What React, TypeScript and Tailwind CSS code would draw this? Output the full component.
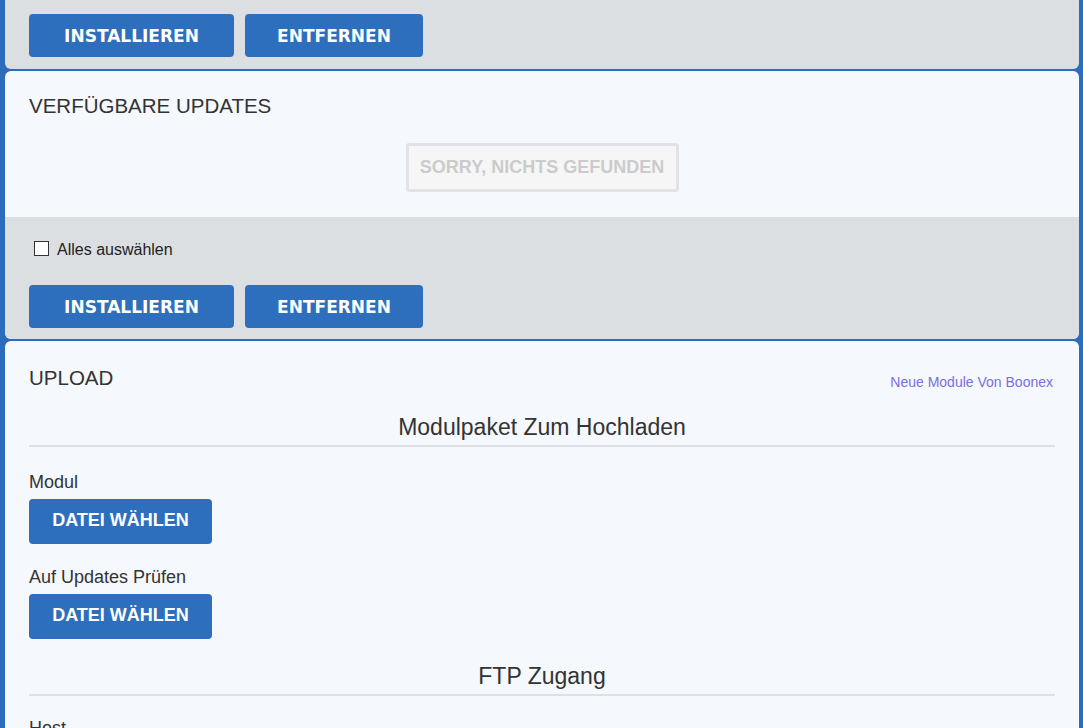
import React from 'react'

const verdana = { fontFamily: '"DejaVu Sans", Verdana, sans-serif' }

function BlueButton({ children, w }: { children: React.ReactNode; w: string }) {
  return (
    <button
      className={`h-[43px] ${w} rounded-[4px] bg-[#2e6fbd] pt-[2px] text-white text-[17px] font-bold`}
      style={verdana}
    >
      {children}
    </button>
  )
}

function ActionRow() {
  return (
    <div className="flex gap-[11px]">
      <BlueButton w="w-[205px]">INSTALLIEREN</BlueButton>
      <BlueButton w="w-[178px]">ENTFERNEN</BlueButton>
    </div>
  )
}

function FileButton() {
  return (
    <button className="h-[45px] w-[183px] rounded-[4px] bg-[#2e6fbd] pb-[3px] text-white text-[18px] font-bold">
      DATEI WÄHLEN
    </button>
  )
}

function SectionTitle({ children }: { children: React.ReactNode }) {
  return (
    <div className="border-b-2 border-[#dde1e6] pb-[5px] text-center text-[23px] leading-[26px] text-[#333]">
      {children}
    </div>
  )
}

export default function App() {
  return (
    <div
      className="h-[728px] w-[1083px] overflow-hidden bg-[#2d6cba] pl-[5px] pr-[4px] text-[#333]"
      style={{ fontFamily: '"Liberation Sans", Arial, sans-serif' }}
    >
      {/* installed modules footer (cut off) */}
      <div className="flex h-[69px] items-end rounded-b-[6px] bg-[#dcdfe2] px-[24px] pb-[12px]">
        <ActionRow />
      </div>

      {/* updates */}
      <div className="mt-[2px] overflow-hidden rounded-[6px] bg-[#f5f8fc]">
        <div className="h-[146px] px-[24px] pt-[24px]">
          <div className="text-[20.5px] leading-[22px] text-[#333]">VERFÜGBARE UPDATES</div>
          <div className="mt-[26px] flex justify-center">
            <div className="flex h-[49px] w-[273px] items-center justify-center rounded-[3px] border-[3px] border-[#e1e3e6] bg-[#f6f6f6] text-[18px] font-bold text-[#cbcbcb]">
              SORRY, NICHTS GEFUNDEN
            </div>
          </div>
        </div>
        <div className="h-[122px] bg-[#dcdfe2] px-[24px] pt-[21px]">
          <label className="ml-[5px] flex h-[20px] items-center gap-[8px] text-[16px] leading-[20px] text-[#222]">
            <span className="inline-block h-[15px] w-[15px] border border-[#333] bg-white" />
            <span className="mt-[3px]">Alles auswählen</span>
          </label>
          <div className="mt-[27px]">
            <ActionRow />
          </div>
        </div>
      </div>

      {/* upload */}
      <div className="mt-[2px] rounded-t-[6px] bg-[#f5f8fc] px-[24px] pt-[26px] pb-[40px]">
        <div className="flex items-start justify-between">
          <div className="text-[20.5px] leading-[22px]">UPLOAD</div>
          <a className="mr-[2px] mt-[5px] text-[14px] text-[#7b6fe0]">Neue Module Von Boonex</a>
        </div>
        <div className="mt-[21px]">
          <SectionTitle>Modulpaket Zum Hochladen</SectionTitle>
        </div>
        <div className="mt-[25px] text-[18px] leading-[20px]">Modul</div>
        <div className="mt-[7px]">
          <FileButton />
        </div>
        <div className="mt-[23px] text-[18px] leading-[20px]">Auf Updates Prüfen</div>
        <div className="mt-[7px]">
          <FileButton />
        </div>
        <div className="mt-[24px]">
          <SectionTitle>FTP Zugang</SectionTitle>
        </div>
        <div className="mt-[22px] text-[18px] leading-[20px]">Host</div>
      </div>
    </div>
  )
}
